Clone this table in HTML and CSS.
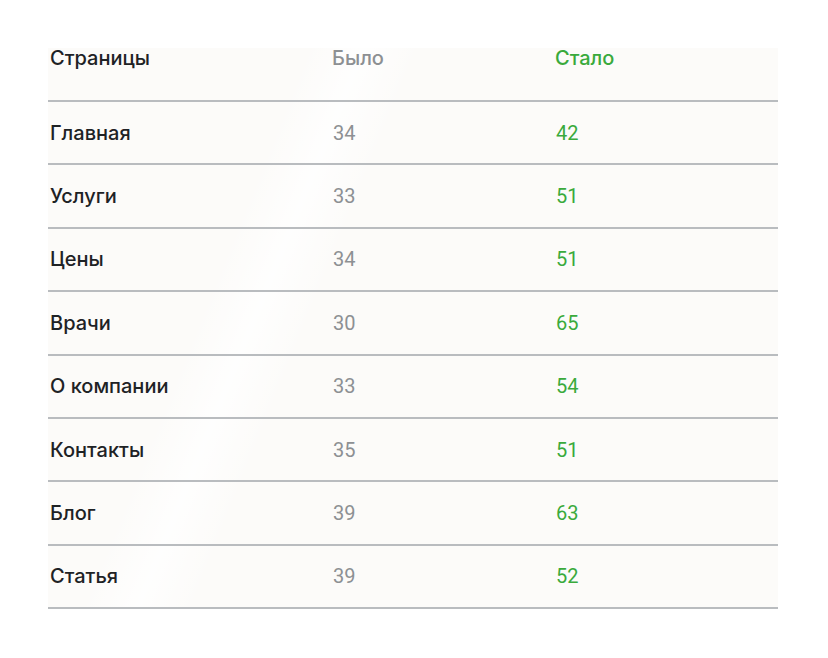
FILE: index.html
```html
<!DOCTYPE html>
<html lang="ru">
<head>
<meta charset="utf-8">
<link rel="stylesheet" href="styles.css">
</head>
<body>
<div class="table">
  <div class="row head">
    <div class="name">Страницы</div>
    <div class="was">Было</div>
    <div class="now">Стало</div>
  </div>
  <div class="row"><div class="name">Главная</div><div class="was num">34</div><div class="now num">42</div></div>
  <div class="row"><div class="name">Услуги</div><div class="was num">33</div><div class="now num">51</div></div>
  <div class="row"><div class="name">Цены</div><div class="was num">34</div><div class="now num">51</div></div>
  <div class="row"><div class="name">Врачи</div><div class="was num">30</div><div class="now num">65</div></div>
  <div class="row"><div class="name">О компании</div><div class="was num">33</div><div class="now num">54</div></div>
  <div class="row"><div class="name">Контакты</div><div class="was num">35</div><div class="now num">51</div></div>
  <div class="row"><div class="name">Блог</div><div class="was num">39</div><div class="now num">63</div></div>
  <div class="row"><div class="name">Статья</div><div class="was num">39</div><div class="now num">52</div></div>
</div>
</body>
</html>
```
FILE: styles.css
```css
html, body {
  margin: 0;
  padding: 0;
  background: #ffffff;
}
body {
  padding-top: 48px;
}
.table {
  margin-left: 48px;
  width: 730px;
  background:
    linear-gradient(112deg, rgba(255,255,255,0) 27%, rgba(255,255,255,0.8) 33%, rgba(255,255,255,0) 39%),
    #fcfbf9;
}
.row {
  display: grid;
  grid-template-columns: 284px 223px 1fr;
  align-items: center;
  height: 61.375px;
  border-bottom: 2px solid #b9bcbf;
}
.row.head {
  height: 52px;
  align-items: start;
}
.name {
  padding-left: 2px;
  font-family: Inter, "Noto Sans", sans-serif;
  font-weight: 500;
  font-size: 20px;
  color: #1e2225;
}
.head .name, .head .was, .head .now {
  font-family: Inter, "Noto Sans", sans-serif;
  font-weight: 500;
  font-size: 20px;
  line-height: 20px;
}
.was {
  color: #8d9093;
}
.now {
  color: #3aaa3c;
}
.num {
  font-family: Roboto, sans-serif;
  font-weight: 400;
  font-size: 20px;
  padding-left: 1px;
}
```
